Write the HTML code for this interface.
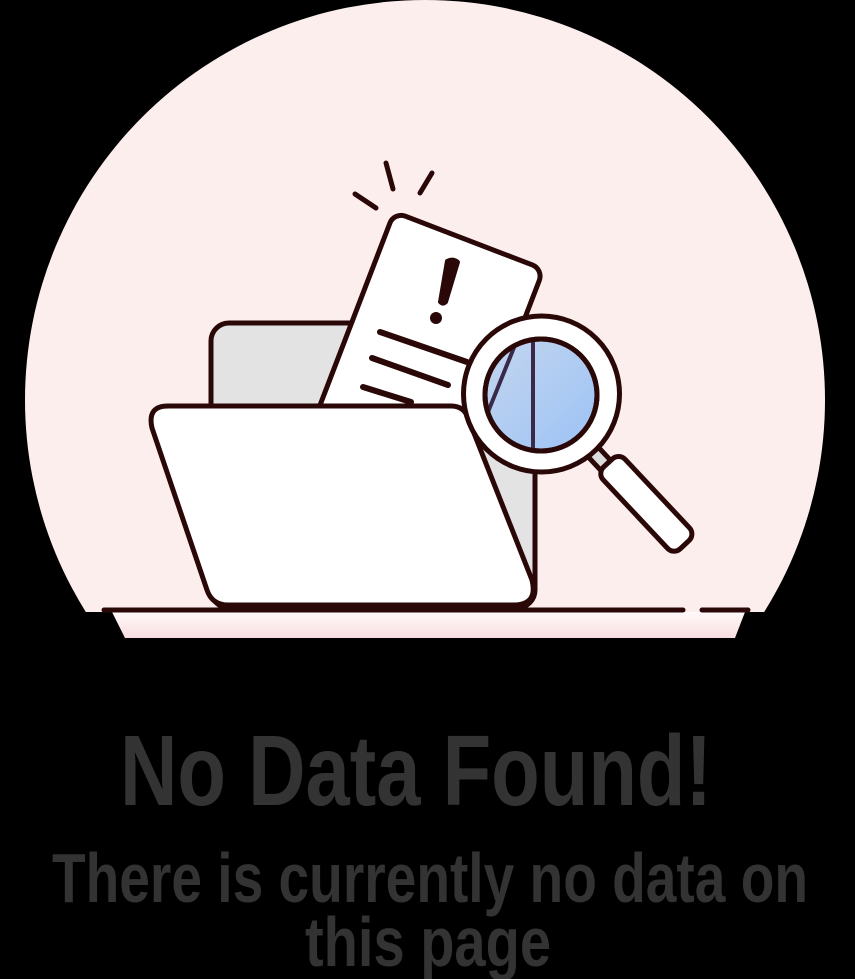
<!DOCTYPE html>
<html><head><meta charset="utf-8"><style>
html,body{margin:0;padding:0;background:#000;width:855px;height:979px;overflow:hidden}
svg{display:block}
</style></head><body>
<svg width="855" height="979" viewBox="0 0 855 979" xmlns="http://www.w3.org/2000/svg">
<defs>
<clipPath id="c"><rect x="0" y="0" width="855" height="612"/></clipPath>
<linearGradient id="lens" x1="0" y1="0" x2="1" y2="1"><stop offset="0" stop-color="#c4d6ee"/><stop offset="1" stop-color="#9cc2f6"/></linearGradient>
<linearGradient id="fade" x1="0" y1="0" x2="0" y2="1"><stop offset="0" stop-color="#fffafa"/><stop offset="1" stop-color="#f9dde0"/></linearGradient>
<clipPath id="lc"><circle cx="541" cy="395" r="56"/></clipPath>
</defs>
<circle cx="425" cy="400" r="400" fill="#fdeeee" clip-path="url(#c)"/>
<polygon points="112,612 745,612 735,638 125,638" fill="url(#fade)"/>
<g fill="none" stroke="#2a0808" stroke-width="5" stroke-linecap="round" stroke-linejoin="round">
<rect x="211" y="323" width="324" height="285" rx="18" fill="#e3e3e3"/>
<line x1="386" y1="163" x2="393" y2="189"/>
<line x1="432" y1="173" x2="420" y2="193"/>
<line x1="355" y1="194" x2="376" y2="208"/>
<g transform="translate(397,213) rotate(21)">
<rect x="-3" y="0" width="160" height="270" rx="12" fill="#fff"/>
</g>
<path d="M447 261 Q453 258 458 262 L446 302 Q443 305 440 302 Z" fill="#2a0808" stroke-width="4"/>
<circle cx="436" cy="318" r="6" fill="#2a0808" stroke="none"/>
<line x1="380" y1="332" x2="467" y2="362" stroke-width="6"/>
<line x1="372" y1="358" x2="448" y2="385" stroke-width="6"/>
<line x1="363" y1="387" x2="411" y2="402" stroke-width="6"/>
<path d="M168 406 L451 406 Q464 406 468 418 L532 580 Q538 604 515 605 L228 605 Q212 605 207 590 L152 428 Q147 406 168 406 Z" fill="#fff"/>
<line x1="104" y1="610" x2="683" y2="610"/>
<line x1="702" y1="610" x2="748" y2="610"/>
<rect x="-8" y="-7" width="22" height="14" transform="translate(596 455) rotate(46.8)" fill="#dcdcdc"/>
<rect x="0" y="-15" width="112" height="30" rx="9" transform="translate(608 463) rotate(46.8)" fill="#fff"/>
<circle cx="541.5" cy="394" r="78" fill="#fff"/>
<circle cx="541" cy="395" r="56" fill="url(#lens)"/>
<g clip-path="url(#lc)" stroke="#3a2a4a" stroke-width="4">
<line x1="533" y1="330" x2="533" y2="460"/>
<line x1="515" y1="345" x2="488" y2="412"/>
</g>
<circle cx="541" cy="395" r="56"/>
</g>
<g font-family="Liberation Sans, sans-serif" font-weight="bold" fill="#333" text-anchor="start">
<text x="120" y="805" font-size="100" textLength="592" lengthAdjust="spacingAndGlyphs">No Data Found!</text>
<text x="52" y="902" font-size="70" textLength="756" lengthAdjust="spacingAndGlyphs">There is currently no data on</text>
<text x="305" y="966" font-size="70" textLength="246" lengthAdjust="spacingAndGlyphs">this page</text>
</g>
</svg>
</body></html>
